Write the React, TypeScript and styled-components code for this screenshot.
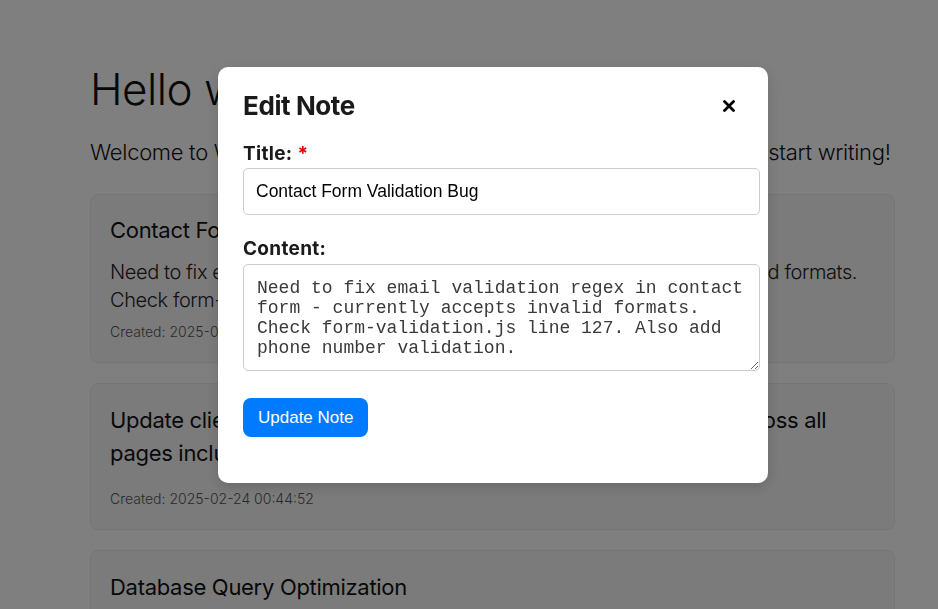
import React from "react";
import styled, { createGlobalStyle } from "styled-components";

const Global = createGlobalStyle`
  html, body { margin: 0; padding: 0; background: #ffffff; }
  body { font-family: "Inter", "Noto Sans", sans-serif; color: #111; }
  * { box-sizing: border-box; }
`;

const Page = styled.div`
  width: 938px;
  height: 609px;
  overflow: hidden;
  padding: 63px 43px 0 90px;
`;

const Heading = styled.h1`
  margin: 0;
  font-size: 44px;
  line-height: 53px;
  font-weight: 300;
  letter-spacing: -0.5px;
  color: #111;
`;

const Subtitle = styled.p`
  margin: 20px 0 25px;
  font-size: 22px;
  line-height: 33px;
  font-weight: 300;
  letter-spacing: -0.3px;
  color: #111;
  white-space: nowrap;
`;

const NoteList = styled.div`
  display: flex;
  flex-direction: column;
  gap: 20px;
`;

const Card = styled.div`
  background: #f7f7f7;
  border: 1px solid #ebebeb;
  border-radius: 8px;
  padding: 19px 19px 20px;
`;

const CardTitle = styled.h3<{ $top?: number }>`
  margin: ${(p) => p.$top ?? 0}px 0 0;
  font-size: 22px;
  line-height: 33px;
  font-weight: 400;
  letter-spacing: -0.3px;
  color: #111;
`;

const CardBody = styled.p`
  margin: 11px 0 0;
  font-size: 20px;
  line-height: 28px;
  font-weight: 300;
  letter-spacing: -0.4px;
  color: #222;
`;

const CardMeta = styled.div<{ $gap: number }>`
  margin-top: ${(p) => p.$gap}px;
  font-size: 14px;
  line-height: 20px;
  font-weight: 300;
  color: #555;
`;

const Overlay = styled.div`
  position: fixed;
  inset: 0;
  background: rgba(0, 0, 0, 0.5);
  padding: 67px 0 0 218px;
`;

const Modal = styled.div`
  width: 550px;
  height: 416px;
  background: #fff;
  border-radius: 10px;
  box-shadow: 0 4px 14px rgba(0, 0, 0, 0.15);
  padding: 23px 8px 25px 25px;
  display: flex;
  flex-direction: column;
`;

const ModalHeader = styled.div`
  display: flex;
  align-items: center;
  justify-content: space-between;
  padding-right: 25px;
  margin-bottom: 22px;
`;

const ModalTitle = styled.h2`
  margin: 0;
  font-size: 26px;
  line-height: 31px;
  font-weight: 700;
  letter-spacing: -0.4px;
  color: #1a1a1a;
`;

const CloseButton = styled.button`
  border: none;
  background: none;
  padding: 0;
  width: 12px;
  height: 12px;
  display: flex;
  align-items: center;
  justify-content: center;
  cursor: pointer;
`;

const Field = styled.div<{ $mb: number }>`
  display: flex;
  flex-direction: column;
  margin-bottom: ${(p) => p.$mb}px;
`;

const Label = styled.label`
  font-size: 19px;
  line-height: 22px;
  font-weight: 700;
  letter-spacing: 0.3px;
  color: #1a1a1a;
  margin-bottom: 3px;
`;

const Required = styled.span`
  color: #e00000;
  margin-left: 5px;
`;

const TextInput = styled.input`
  width: 517px;
  height: 47px;
  padding: 0 12px;
  border: 1px solid #cccccc;
  border-radius: 5px;
  font-family: "Liberation Sans", Arial, sans-serif;
  font-size: 17.5px;
  color: #000;
  outline: none;
`;

const TextArea = styled.textarea`
  width: 517px;
  height: 107px;
  padding: 13px 12px 9px 13px;
  border: 1px solid #cccccc;
  border-radius: 5px;
  font-family: "Liberation Mono", "Courier New", monospace;
  font-size: 18px;
  line-height: 20px;
  color: #3a3a3a;
  outline: none;
  resize: vertical;
  margin-top: 1px;
`;

const SubmitButton = styled.button`
  align-self: flex-start;
  height: 39px;
  padding: 0 15px;
  background: #007bff;
  color: #fff;
  border: none;
  border-radius: 8px;
  font-family: "Liberation Sans", Arial, sans-serif;
  font-size: 17px;
  cursor: pointer;
`;

export default function App() {
  return (
    <>
      <Global />
      <Page>
        <Heading>Hello writer!</Heading>
        <Subtitle>Welcome to WriteNotes! Your notes are listed below. Click on one to start writing!</Subtitle>
        <NoteList>
          <Card>
            <CardTitle>Contact Form Validation Bug</CardTitle>
            <CardBody>
              Need to fix email validation regex in contact form - currently accepts invalid formats.
              Check form-validation.js line 127. Also add phone number validation.
            </CardBody>
            <CardMeta $gap={8}>Created: 2025-02-24 00:44:52</CardMeta>
          </Card>
          <Card>
            <CardTitle $top={1}>
              Update client website with the new branding and typography across all
              pages including footer and contact sections
            </CardTitle>
            <CardMeta $gap={19}>Created: 2025-02-24 00:44:52</CardMeta>
          </Card>
          <Card>
            <CardTitle $top={1}>Database Query Optimization</CardTitle>
            <CardBody>Improve the slow queries on the reports dashboard.</CardBody>
            <CardMeta $gap={8}>Created: 2025-02-24 00:44:52</CardMeta>
          </Card>
        </NoteList>
      </Page>
      <Overlay>
        <Modal>
          <ModalHeader>
            <ModalTitle>Edit Note</ModalTitle>
            <CloseButton aria-label="Close">
              <svg width="12" height="12" viewBox="0 0 12 12">
                <path d="M1.5 1.5 L10.5 10.5 M10.5 1.5 L1.5 10.5" stroke="#000" strokeWidth="2.8" strokeLinecap="round" />
              </svg>
            </CloseButton>
          </ModalHeader>
          <Field $mb={23}>
            <Label>
              Title:<Required>*</Required>
            </Label>
            <TextInput defaultValue="Contact Form Validation Bug" />
          </Field>
          <Field $mb={27}>
            <Label>Content:</Label>
            <TextArea
              rows={4}
              defaultValue="Need to fix email validation regex in contact form - currently accepts invalid formats. Check form-validation.js line 127. Also add phone number validation."
            />
          </Field>
          <SubmitButton>Update Note</SubmitButton>
        </Modal>
      </Overlay>
    </>
  );
}
